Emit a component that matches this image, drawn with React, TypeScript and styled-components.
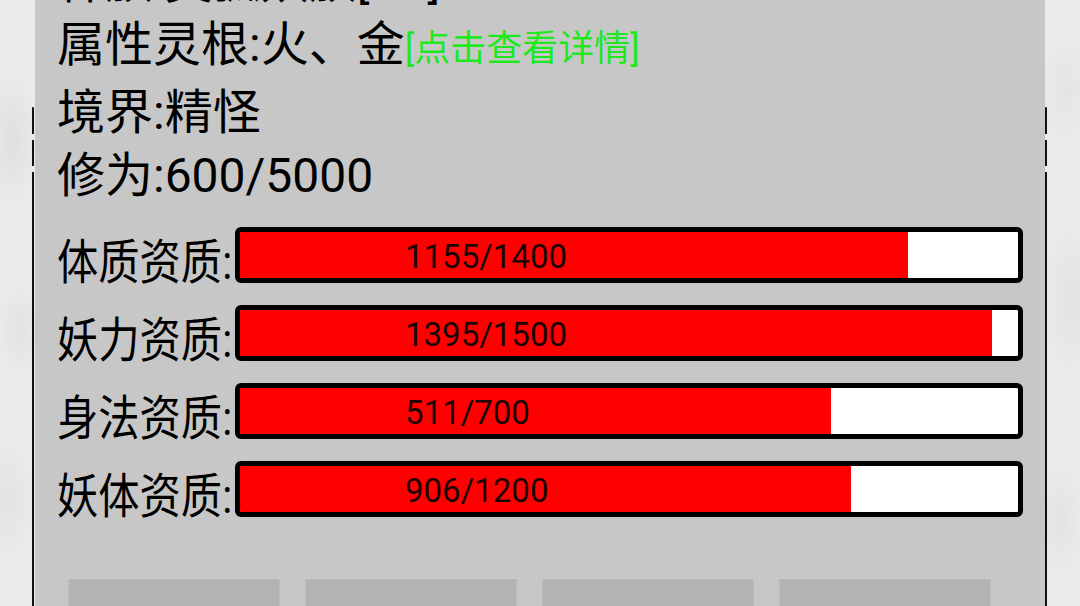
import React from 'react'
import styled, { createGlobalStyle } from 'styled-components'

const GlobalStyle = createGlobalStyle`
  html, body {
    margin: 0;
    padding: 0;
    height: 606px;
    overflow: hidden;
  }
  body {
    font-family: Roboto, "Noto Sans CJK SC", sans-serif;
    color: #000;
    background-color: #ebebeb;
    background-image:
      radial-gradient(ellipse 30px 70px at 12px 140px, rgba(0, 0, 0, 0.05), transparent),
      radial-gradient(ellipse 24px 50px at 20px 330px, rgba(0, 0, 0, 0.04), transparent),
      radial-gradient(ellipse 28px 60px at 8px 500px, rgba(0, 0, 0, 0.04), transparent),
      radial-gradient(ellipse 26px 60px at 1065px 90px, rgba(0, 0, 0, 0.03), transparent),
      radial-gradient(ellipse 30px 80px at 1070px 300px, rgba(0, 0, 0, 0.04), transparent),
      radial-gradient(ellipse 24px 60px at 1060px 520px, rgba(0, 0, 0, 0.04), transparent);
  }
`

const Page = styled.div`
  padding: 0 35px;
`

// frame edge segments peeking out beside the panel
const edge = `
  content: '';
  position: absolute;
  top: 157px;
  bottom: 0;
  width: 2px;
  border-radius: 1px;
  background: linear-gradient(
    to bottom,
    #111 0 27px,
    transparent 27px 33px,
    #111 33px 59px,
    transparent 59px 65px,
    #111 65px
  );
`

const Panel = styled.div`
  position: relative;
  margin-top: -50px;
  padding: 0 22px 60px;
  background: #c7c7c7;

  &::before {
    ${edge}
    left: -3px;
  }
  &::after {
    ${edge}
    right: -2px;
  }
`

const InfoLine = styled.div`
  font-size: 48px;
  line-height: 63px;
  white-space: nowrap;
`

const Link = styled.span`
  font-size: 36px;
  color: #1ee81e;
`

const StatList = styled.div`
  display: flex;
  flex-direction: column;
  gap: 22px;
  margin-top: 20px;
`

const StatRow = styled.div`
  display: flex;
  height: 56px;
`

const StatLabel = styled.div`
  flex: none;
  width: 178px;
  font-size: 48px;
  line-height: 56px;
  white-space: nowrap;

  span {
    display: inline-block;
    transform-origin: left center;
    transform: translateY(8px) scaleX(0.86);
  }
`

const Bar = styled.div`
  flex: 1;
  display: grid;
  border: 5px solid #000;
  border-radius: 6px;
  background: #fff;
  overflow: hidden;

  & > * {
    grid-area: 1 / 1;
  }
`

const Fill = styled.div`
  height: 100%;
  background: #ff0000;
`

const BarText = styled.div`
  align-self: center;
  padding: 3px 0 0 165px;
  font-size: 33px;
  line-height: 1;
  color: #1a0505;
`

const ButtonRow = styled.div`
  display: flex;
  gap: 25px;
  margin-top: 61px;
  padding-left: 11px;
`

const Button = styled.button`
  width: 212px;
  height: 72px;
  border: 1px solid #bdbdbd;
  border-top-color: #cdcdcd;
  border-radius: 3px;
  background: #b3b3b3;
  font-family: inherit;
`

const stats = [
  { label: '体质资质', value: 1155, max: 1400 },
  { label: '妖力资质', value: 1395, max: 1500 },
  { label: '身法资质', value: 511, max: 700 },
  { label: '妖体资质', value: 906, max: 1200 },
]

export default function App() {
  return (
    <Page>
      <GlobalStyle />
      <Panel>
        <InfoLine>种族:灵狐妖族[SR]</InfoLine>
        <InfoLine>
          属性灵根:火、金<Link>[点击查看详情]</Link>
        </InfoLine>
        <InfoLine>境界:精怪</InfoLine>
        <InfoLine>修为:600/5000</InfoLine>

        <StatList>
          {stats.map((s) => (
            <StatRow key={s.label}>
              <StatLabel>
                <span>{s.label}:</span>
              </StatLabel>
              <Bar>
                <Fill style={{ width: `${Math.min(100, (s.value / s.max) * 104)}%` }} />
                <BarText>
                  {s.value}/{s.max}
                </BarText>
              </Bar>
            </StatRow>
          ))}
        </StatList>

        <ButtonRow>
          <Button />
          <Button />
          <Button />
          <Button />
        </ButtonRow>
      </Panel>
    </Page>
  )
}
